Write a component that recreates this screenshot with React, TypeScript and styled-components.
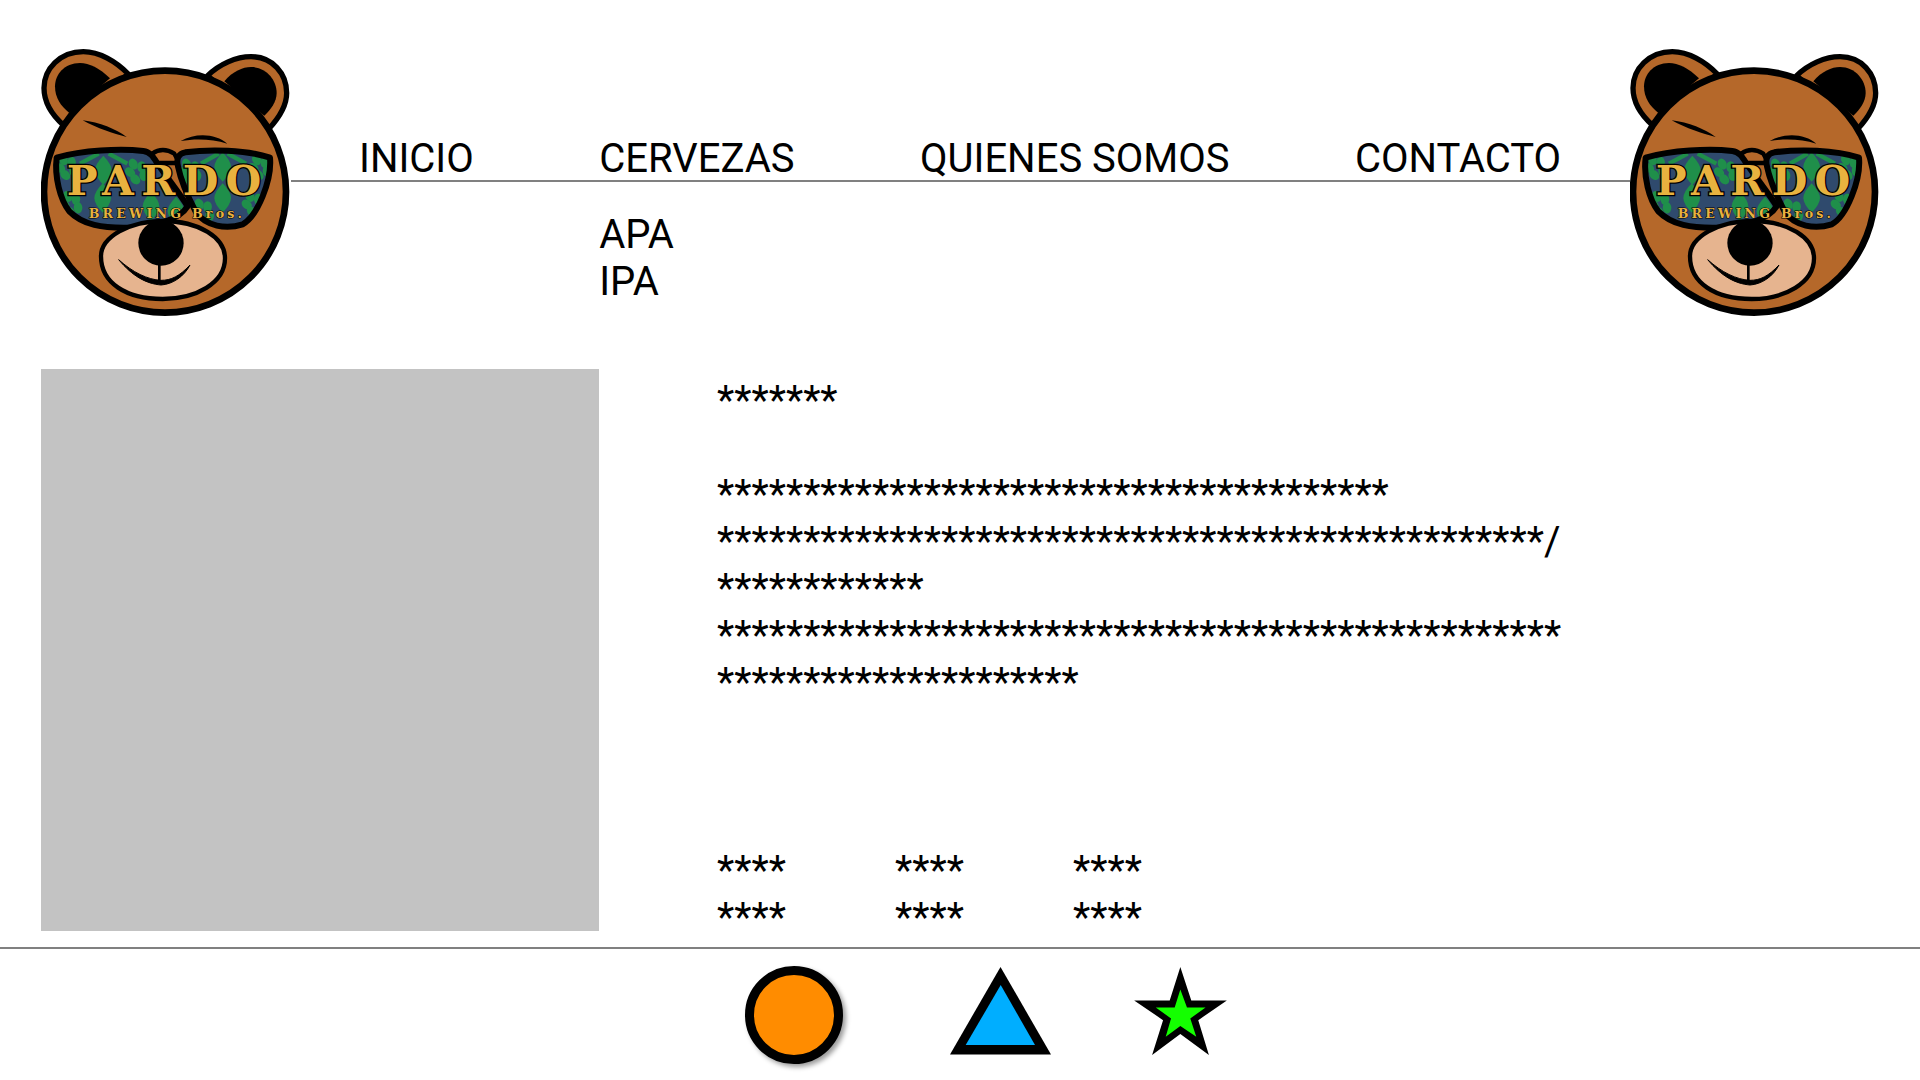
import React from 'react';
import styled, { createGlobalStyle } from 'styled-components';

const navItems = ['INICIO', 'CERVEZAS', 'QUIENES SOMOS', 'CONTACTO'];
const subItems = ['APA', 'IPA'];
const stars = (n: number) => '*'.repeat(n);

const leaves = [
  [252, 422], [250, 505], [610, 412], [610, 505], [395, 530], [470, 545],
];
const hops = [
  [142, 412], [155, 522], [352, 425], [512, 425], [722, 412], [702, 522], [550, 545],
];
const bands = [
  'M182 402 L238 372',
  'M268 372 L324 402',
  'M545 402 L598 372',
  'M625 372 L680 402',
];

const LEFT_LENS =
  'M112 384 C190 362 300 356 372 364 C392 366 402 382 412 398 C440 440 480 490 505 530 C480 572 400 592 330 594 C250 596 190 586 150 545 C122 510 105 440 112 384Z';
const RIGHT_LENS =
  'M752 384 C680 360 570 358 498 368 C478 372 470 385 476 410 C484 450 505 500 530 548 C560 590 620 600 670 584 C715 560 758 450 752 384Z';

const Hop = ({ x, y }: { x: number; y: number }) => (
  <g transform={`translate(${x} ${y}) rotate(-25)`}>
    <ellipse cx="0" cy="-24" rx="13" ry="17" />
    <ellipse cx="-19" cy="-6" rx="13" ry="17" transform="rotate(-25 -19 -6)" />
    <ellipse cx="19" cy="-6" rx="13" ry="17" transform="rotate(25 19 -6)" />
    <ellipse cx="-14" cy="20" rx="13" ry="17" transform="rotate(-20 -14 20)" />
    <ellipse cx="14" cy="20" rx="13" ry="17" transform="rotate(20 14 20)" />
  </g>
);

const Lens = ({ d, id }: { d: string; id: string }) => (
  <g>
    <clipPath id={id}>
      <path d={d} />
    </clipPath>
    <path d={d} fill="#2f4a6d" />
    <g clipPath={`url(#${id})`} fill="#1f8f4a">
      {leaves.map(([x, y]) => (
        <path
          key={`${x}-${y}`}
          transform={`translate(${x} ${y})`}
          d="M0 -44 Q25 -18 25 0 Q25 18 0 44 Q-25 18 -25 0 Q-25 -18 0 -44Z"
        />
      ))}
      {hops.map(([x, y]) => (
        <Hop key={`${x}-${y}`} x={x} y={y} />
      ))}
      {bands.map((band) => (
        <path key={band} d={band} stroke="#1f8f4a" strokeWidth="13" fill="none" />
      ))}
    </g>
    <path d={d} fill="none" stroke="#000" strokeWidth="18" strokeLinejoin="round" />
  </g>
);

const BearLogo = () => (
  <LogoSvg viewBox="65 52 750 810">
    <path
      d="M327 133 C290 95 240 66 192 66 C122 66 74 118 74 175 C74 220 100 258 134 288Z"
      fill="#b5682a"
      stroke="#000"
      strokeWidth="16"
      strokeLinejoin="round"
    />
    <path d="M272 146 C240 115 210 100 182 100 C135 100 107 135 107 170 C107 205 125 230 150 250Z" fill="#000" />
    <path
      d="M565 138 C600 104 650 81 695 81 C760 81 802 132 802 190 C802 230 776 268 748 298Z"
      fill="#b5682a"
      stroke="#000"
      strokeWidth="16"
      strokeLinejoin="round"
    />
    <path d="M615 155 C640 125 670 112 695 112 C740 112 772 150 772 190 C772 215 755 240 735 258Z" fill="#000" />
    <circle cx="437" cy="486" r="363" fill="#b5682a" stroke="#000" strokeWidth="20" />
    <path d="M190 272 C240 278 290 298 322 322 C280 312 235 296 190 272Z" fill="#000" />
    <path d="M484 334 C530 308 590 312 624 342 C580 328 530 326 484 334Z" fill="#000" />
    <path d="M398 372 Q430 350 465 372 L480 400 L400 400Z" fill="#b5682a" stroke="#000" strokeWidth="13" />
    <Lens d={LEFT_LENS} id="lens-left" />
    <Lens d={RIGHT_LENS} id="lens-right" />
    <LogoTitle x="142" y="496" textLength="584" lengthAdjust="spacing">
      PARDO
    </LogoTitle>
    <LogoSubtitle x="208" y="564" textLength="460" lengthAdjust="spacing">
      BREWING Bros.
    </LogoSubtitle>
    <path
      d="M430 574 C540 574 617 624 617 686 C617 760 530 808 430 808 C320 808 245 760 245 680 C245 622 330 574 430 574Z"
      fill="#e6b48f"
      stroke="#000"
      strokeWidth="13"
    />
    <circle cx="425" cy="640" r="68" fill="#000" />
    <path d="M420 700 V762" stroke="#000" strokeWidth="8" fill="none" />
    <path d="M298 690 C340 740 380 762 425 766 C460 764 495 740 512 706 C480 740 455 752 425 752 C385 750 340 728 298 690Z" fill="#000" stroke="#000" strokeWidth="3" />
  </LogoSvg>
);

const App = () => (
  <Page>
    <GlobalStyle />
    <Header>
      <BearLogo />
      <Nav>
        <NavRow>
          {navItems.map((item) => (
            <NavItem key={item}>
              <NavLabel>{item}</NavLabel>
              {item === 'CERVEZAS' && (
                <SubMenu>
                  {subItems.map((sub) => (
                    <li key={sub}>{sub}</li>
                  ))}
                </SubMenu>
              )}
            </NavItem>
          ))}
        </NavRow>
      </Nav>
      <BearLogo />
    </Header>

    <Main>
      <PhotoPlaceholder />
      <Details>
        <Line>{stars(7)}</Line>
        <Description>
          <Line>{stars(39)}</Line>
          <Line>{stars(48)}/</Line>
          <Line>{stars(12)}</Line>
          <Line>{stars(49)}</Line>
          <Line>{stars(21)}</Line>
        </Description>
        <SpecsGrid>
          {Array.from({ length: 6 }).map((_, i) => (
            <Line key={i}>{stars(4)}</Line>
          ))}
        </SpecsGrid>
      </Details>
    </Main>

    <Footer>
      <CircleIcon />
      <TriangleSvg viewBox="0 0 101 88">
        <polygon points="50.5,0 0,87.5 101,87.5" fill="#000" />
        <polygon points="50.7,18 15.7,78 85,78" fill="#00aeff" />
      </TriangleSvg>
      <StarSvg viewBox="1243 110 279 265">
        <polygon
          points="1382,110 1415,211 1522,211 1436,270 1468,375 1382,312 1297,375 1330,270 1243,211 1350,211"
          fill="#000"
        />
        <polygon
          points="1382,178 1402,232 1458,232 1412,265 1430,320 1382,288 1338,320 1354,265 1308,232 1365,232"
          fill="#14ff00"
        />
      </StarSvg>
    </Footer>
  </Page>
);

export default App;

const GlobalStyle = createGlobalStyle`
  html, body {
    margin: 0;
    padding: 0;
    background: #fff;
  }
  body {
    font-family: Roboto, "Liberation Sans", sans-serif;
    color: #000;
  }
`;

const Page = styled.div`
  width: 1920px;
  height: 1080px;
  overflow: hidden;
  font-size: 40px;
  line-height: 47px;
`;

const Header = styled.header`
  display: flex;
  align-items: flex-start;
  height: 322px;
  padding: 47px 40px 0 41px;
  box-sizing: border-box;
`;

const LogoSvg = styled.svg`
  flex: none;
  width: 250px;
  height: 270px;
`;

const LogoTitle = styled.text`
  font-family: "DejaVu Serif", serif;
  font-weight: 700;
  font-size: 123px;
  fill: #e8b23f;
  stroke: #000;
  stroke-width: 8px;
  paint-order: stroke;
`;

const LogoSubtitle = styled.text`
  font-family: "DejaVu Serif", serif;
  font-weight: 700;
  font-size: 38px;
  fill: #e8b23f;
  stroke: #000;
  stroke-width: 3px;
  paint-order: stroke;
`;

const Nav = styled.nav`
  flex: 1;
  padding-top: 88px;
`;

const NavRow = styled.ul`
  display: flex;
  gap: 125.5px;
  height: 47px;
  box-sizing: border-box;
  margin: 0;
  padding: 0 0 0 68px;
  list-style: none;
  border-bottom: 2px solid #808080;
`;

const NavItem = styled.li`
  flex: none;
`;

const NavLabel = styled.span`
  display: block;
`;

const SubMenu = styled.ul`
  margin: 29px 0 0;
  padding: 0;
  list-style: none;
`;

const Main = styled.main`
  display: flex;
  align-items: flex-start;
  height: 627px;
  padding: 47px 0 0 41px;
  box-sizing: border-box;
  border-bottom: 2px solid #808080;
`;

const PhotoPlaceholder = styled.div`
  flex: none;
  width: 558px;
  height: 562px;
  background: #c3c3c3;
`;

const Details = styled.section`
  margin-left: 118px;
  padding-top: 8px;
`;

const Line = styled.div`
  white-space: nowrap;
`;

const Description = styled.div`
  margin-top: 47px;
`;

const SpecsGrid = styled.div`
  display: grid;
  grid-template-columns: repeat(3, 178px);
  margin-top: 141px;
`;

const Footer = styled.footer`
  display: flex;
  align-items: flex-start;
  padding: 17px 0 0 745px;
`;

const CircleIcon = styled.div`
  flex: none;
  width: 98px;
  height: 98px;
  box-sizing: border-box;
  border: 9px solid #000;
  border-radius: 50%;
  background: #ff8c00;
  box-shadow: 3px 3px 5px rgba(0, 0, 0, 0.4);
`;

const TriangleSvg = styled.svg`
  flex: none;
  width: 101px;
  height: 88px;
  margin: 1px 0 0 107px;
`;

const StarSvg = styled.svg`
  flex: none;
  width: 93px;
  height: 88px;
  margin: 1px 0 0 83px;
`;
